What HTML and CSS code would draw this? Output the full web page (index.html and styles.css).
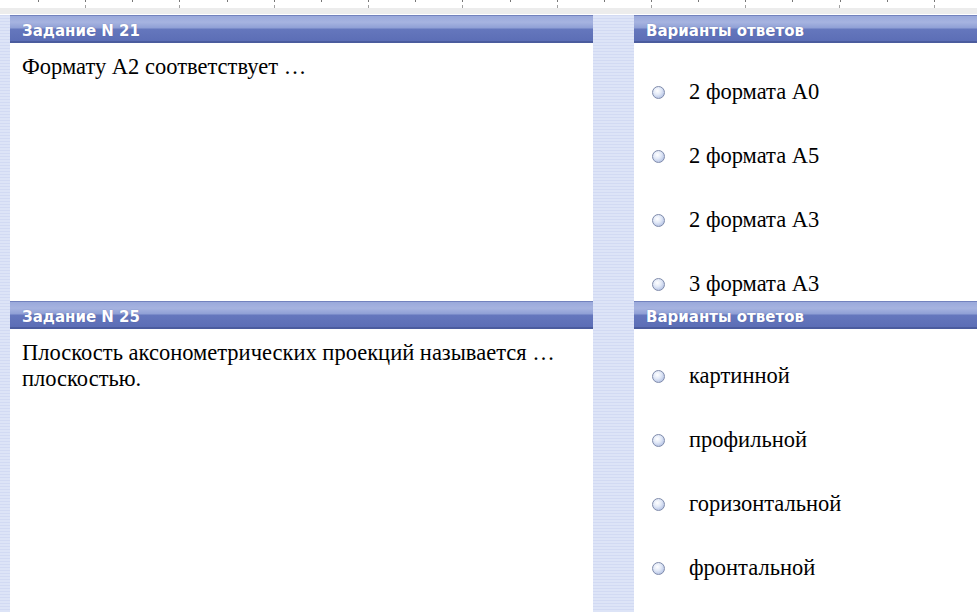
FILE: index.html
```html
<!DOCTYPE html>
<html lang="ru">
<head>
    <meta charset="UTF-8">
    <meta name="viewport" content="width=device-width, initial-scale=1.0">
    <title>Задания</title>
    <link rel="stylesheet" href="styles.css">
</head>
<body>
    <div class="ruler"></div>

    <div class="sheet">
        <!-- Задание 21 -->
        <section class="panel">
            <div class="panel-head">Задание N 21</div>
            <div class="question">Формату А2 соответствует …</div>
        </section>
        <section class="panel">
            <div class="panel-head">Варианты ответов</div>
            <ul class="answers">
                <li><span class="radio"></span>2 формата А0</li>
                <li><span class="radio"></span>2 формата А5</li>
                <li><span class="radio"></span>2 формата А3</li>
                <li><span class="radio"></span>3 формата А3</li>
            </ul>
        </section>

        <!-- Задание 25 -->
        <section class="panel">
            <div class="panel-head">Задание N 25</div>
            <div class="question">Плоскость аксонометрических проекций называется … плоскостью.</div>
        </section>
        <section class="panel">
            <div class="panel-head">Варианты ответов</div>
            <ul class="answers answers-low">
                <li><span class="radio"></span>картинной</li>
                <li><span class="radio"></span>профильной</li>
                <li><span class="radio"></span>горизонтальной</li>
                <li><span class="radio"></span>фронтальной</li>
            </ul>
        </section>
    </div>
</body>
</html>
```

FILE: styles.css
```css
html, body {
    margin: 0;
    height: 100%;
    overflow: hidden;
}

body {
    background-color: #ffffff;
    font-family: "Liberation Serif", serif;
}

/* ruler strip along the top edge */
.ruler {
    height: 15px;
    box-sizing: border-box;
    background:
        repeating-linear-gradient(90deg, transparent 0 85px, #a0a0a0 85px 86px, transparent 86px 94.3px) 0 5px / 100% 3px no-repeat,
        repeating-linear-gradient(90deg, transparent 0 38px, #777 38px 39px, transparent 39px 47.15px) 0 0 / 100% 2px no-repeat,
        linear-gradient(#ffffff 0 8px, #ececec 8px 14px, #ffffff 14px);
}

/* striped light blue backdrop between the columns */
.sheet {
    display: grid;
    grid-template-columns: 583px 343px;
    grid-template-rows: 286px 320px;
    column-gap: 41px;
    padding-left: 10px;
    background-color: #d6def5;
    background-image: repeating-linear-gradient(#d2daf3 0 1px, #dde4f7 1px 3px);
}

.panel {
    background-color: #ffffff;
    display: flex;
    flex-direction: column;
    overflow: hidden;
}

.panel-head {
    height: 28px;
    box-sizing: border-box;
    padding: 5px 12px 0;
    line-height: 21px;
    border-top: 1px solid #7282be;
    border-bottom: 2px solid #4b5c9e;
    background: linear-gradient(#9aa9db 0%, #a6b3e0 25%, #8f9fd5 48%, #6577bd 52%, #5c6eb6 100%);
    color: #ffffff;
    font-family: "DejaVu Sans", sans-serif;
    font-size: 15px;
    font-weight: bold;
    text-shadow: 0 0 1px rgba(40, 50, 110, 0.4);
}

.question {
    padding: 11px 12px 0;
    font-size: 22.5px;
    line-height: 26px;
    color: #000000;
    max-width: 545px;
}

.answers {
    list-style: none;
    margin: 0;
    padding: 17px 0 0 18px;
}

.answers-low {
    padding-top: 15px;
}

.answers li {
    height: 64px;
    display: flex;
    align-items: center;
    font-size: 22.5px;
    color: #000000;
}

.radio {
    width: 11px;
    height: 11px;
    margin-right: 24px;
    border-radius: 50%;
    border: 1px solid #7f8bab;
    background: radial-gradient(circle at 40% 35%, #ffffff 0%, #e2e9f7 40%, #9fb0db 100%);
}
```
